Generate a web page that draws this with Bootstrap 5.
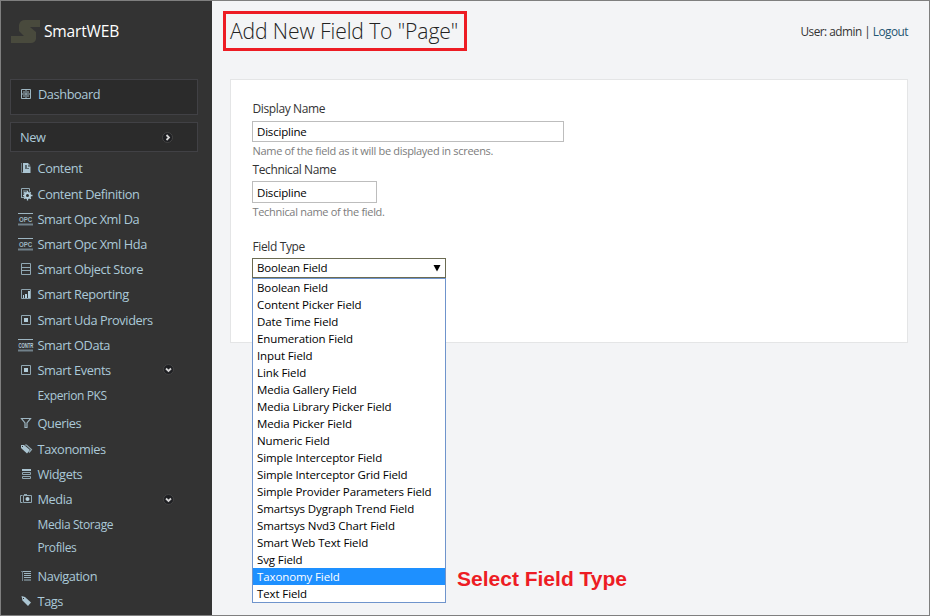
<!DOCTYPE html>
<html lang="en">
<head>
<meta charset="utf-8">
<meta name="viewport" content="width=device-width, initial-scale=1">
<title>SmartWEB - Add New Field</title>
<link href="https://cdn.jsdelivr.net/npm/bootstrap@5.3.0/dist/css/bootstrap.min.css" rel="stylesheet">
<style>
  body { font-family: "Open Sans", "Noto Sans", sans-serif; font-size: 12px; line-height: 18px; color: #333; background: #f3f4f6; }
  .app-frame { height: 616px; border: 1px solid #7f7f7f; }
  .side-panel { width: 211px; background: #333; padding-left: 9px; color: #abc9d8; }
  .side-panel a, .side-panel .nav-label { color: #abc9d8; text-decoration: none; white-space: nowrap; }
  .brand-row { height: 60px; gap: 3px; }
  .brand-name { font-size: 15.6px; color: #fff; letter-spacing: -.2px; }
  .boxed-item { width: 188px; background: #2b2b2b; border: 1px solid #414145; font-size: 12.8px; letter-spacing: -.42px; }
  .dash-item { height: 36px; margin-top: 18px; padding: 0 0 6px 8px; }
  .new-item { height: 30px; margin-top: 7px; padding: 0 24px 0 9px; }
  .menu-list { padding-top: 3.8px; }
  .menu-list .menu-row { height: 25.2px; font-size: 12.8px; letter-spacing: -.42px; padding: 0 38px 0 8px; }
  .ico { width: 16px; height: 16px; flex: none; margin-right: 3.5px; display: block; }
  .dash-item .ico { margin-left: -1px; margin-right: 4px; }
  .chev { width: 11px; height: 11px; flex: none; display: block; }
  .sub-menu { padding: 1.6px 0 3.8px 27.5px; }
  .sub-menu li { height: 23px; font-size: 12px; letter-spacing: -.38px; line-height: 23px; }
  .top-bar { height: 78px; padding: 10px 21px 0 11px; }
  .page-title { width: 244px; height: 40px; border: 3px solid #ed1c24; font-size: 21.1px; font-weight: 300; line-height: 34px; padding-left: 4px; letter-spacing: -.1px; color: #222; white-space: nowrap; }
  .user-info { padding-top: 11px; font-size: 11.8px; letter-spacing: -.5px; }
  .user-info a { color: #1f5571; text-decoration: none; }
  .form-panel { width: 678px; height: 264px; margin-left: 18px; border: 1px solid #e4e5e6; background: #fff; padding: 20px 0 0 21px; letter-spacing: -.38px; }
  .form-panel label, .form-panel .field-title { display: block; height: 18px; margin: 0; padding-left: .5px; }
  .text-box { border: 1px solid #bdbdbd; border-radius: 0; font-size: 11.5px; line-height: 18px; padding: 0 4px; color: #000; letter-spacing: -.2px; min-height: 0; }
  .box-wide { width: 312px; height: 21px; margin-top: 3px; }
  .box-short { width: 125px; height: 22px; margin-top: 2px; }
  .hint-text { height: 19px; font-size: 11px; color: #7c7c7c; letter-spacing: -.31px; padding-left: .5px; }
  .field-title { margin-top: 16px !important; }
  .picker { width: 194px; margin-top: 2px; color: #000; font-size: 11.5px; letter-spacing: -.11px; }
  .picker-value { height: 20px; border: 1px solid #6b6b52; background: #fff; padding: 0 4px; line-height: 18px; letter-spacing: -.15px; }
  .picker-list { top: 20px; left: 0; width: 194px; background: #fff; border: 1px solid #6f94cc; border-radius: 0; z-index: 5; }
  .picker-list li { height: 17px; line-height: 17px; padding-left: 4px; white-space: nowrap; }
  .picker-list li.chosen { background: #1e90ff; color: #fff; }
  .callout-note { left: 205px; top: 309px; font: bold 21px/24px "Liberation Sans", Arial, sans-serif; color: #ed1c24; letter-spacing: 0; white-space: nowrap; }
</style>
<script src="https://cdn.jsdelivr.net/npm/bootstrap@5.3.0/dist/js/bootstrap.bundle.min.js"></script>
</head>
<body>
<svg class="d-none" xmlns="http://www.w3.org/2000/svg">
  <symbol id="i-grid" viewBox="0 0 16 16"><path d="M3.500 3.500h9v9h-9zM8 3v10M3 8h10M5 6h2M9 6h2M5 10h2M9 10h2" fill="none" stroke="#9db5c1"/></symbol>
  <symbol id="i-page" viewBox="0 0 16 16"><path d="M3.500 3v9.500h2" fill="none" stroke="#71818a"/><path d="M5 3h5v3.500h2.500V13H5z" fill="#abc5d2"/><path d="M10 3l2.500 2.500H10z" fill="#8fa5b0"/><path d="M7 5h2v3h2v1H7z" fill="#5c6a71"/></symbol>
  <symbol id="i-def" viewBox="0 0 16 16"><path d="M3.500 12V2.500h8v3M5 5h5M5 7h3M3.500 11.500h3" fill="none" stroke="#91a8b3"/><circle cx="9.500" cy="9.500" r="2.500" fill="none" stroke="#b4cedb" stroke-width="2"/><path d="M9.500 5v2M9.500 12v2.500M5 9.500h2M12 9.500h2.500M6.300 6.300l1.400 1.400M11.300 11.300l1.500 1.500M12.700 6.300l-1.400 1.400M7.700 11.300l-1.500 1.500" stroke="#b4cedb" stroke-width="1.300"/></symbol>
  <symbol id="i-rack" viewBox="0 0 16 16"><path d="M3.500 2.500h9v11h-9zM3.500 6.500h9M3.500 9.500h9" fill="none" stroke="#91a8b3"/></symbol>
  <symbol id="i-chart" viewBox="0 0 16 16"><path d="M3.500 3.500h9v9h-9z" fill="none" stroke="#8ea3ae"/><path d="M5 9h1v3H5zM7 8h2v4H7zM10 5h2v7h-2z" fill="#b4cedb"/></symbol>
  <symbol id="i-square" viewBox="0 0 16 16"><path d="M3.500 3.500h9v9h-9z" fill="none" stroke="#91a8b3"/><path d="M6 6h4v4H6z" fill="#b4cedb"/></symbol>
  <symbol id="i-filter" viewBox="0 0 16 16"><path d="M3.500 3.500h9L9 8v4.500H7V8z" fill="none" stroke="#9db5c1" stroke-width="1.200"/></symbol>
  <symbol id="i-tags" viewBox="0 0 16 16"><path d="M3 4h3l6 5-3 3.500-6-5.500z" fill="#abc5d2"/><path d="M7 4h1.500l5 4.500-2.500 3" fill="none" stroke="#91a8b3" stroke-width="1.200"/><path d="M4 5h1v1H4z" fill="#333"/></symbol>
  <symbol id="i-tag" viewBox="0 0 16 16"><path d="M3.500 3L7 4l6 5.500-3 3.500-5.500-5.500z" fill="#abc5d2"/><path d="M5 5h1v1H5z" fill="#333"/></symbol>
  <symbol id="i-widgets" viewBox="0 0 16 16"><path d="M4 3h9v2H4z" fill="#abc5d2"/><path d="M4.500 6.500h8v2h-8zM4.500 10.500h8v2h-8z" fill="none" stroke="#91a8b3"/></symbol>
  <symbol id="i-camera" viewBox="0 0 16 16"><path d="M4.500 4.500h-2v7h2M5.500 4.500h8v7h-8zM6 3.500h3" fill="none" stroke="#91a8b3"/><circle cx="9.500" cy="8" r="2" fill="#b4cedb"/></symbol>
  <symbol id="i-list" viewBox="0 0 16 16"><path d="M4.500 3v10M3 3.500h3" fill="none" stroke="#71818a"/><path d="M5 3.500h8M6 5.500h7M6 7.500h7M6 9.500h7M6 12h7" fill="none" stroke="#9db5c1"/></symbol>
  <symbol id="i-bars" viewBox="0 0 16 16"><path d="M0 2.500h15" stroke="#9db5c1"/><path d="M0 13.500h15" stroke="#71818a" stroke-width="2"/></symbol>
  <symbol id="c-right" viewBox="0 0 11 11"><circle cx="5.500" cy="5.500" r="5" fill="#1e1f22" stroke="#444"/><path d="M4.500 3l2.500 2.500L4.500 8" fill="none" stroke="#d5d5d5" stroke-width="1.800"/></symbol>
  <symbol id="c-down" viewBox="0 0 11 11"><circle cx="5.500" cy="5.500" r="5" fill="#1e1f22" stroke="#444"/><path d="M3 4.500L5.500 7 8 4.500" fill="none" stroke="#d5d5d5" stroke-width="1.800"/></symbol>
</svg>

<div class="app-frame d-flex overflow-hidden">
  <nav class="side-panel flex-shrink-0">
    <div class="brand-row d-flex align-items-center">
      <svg width="31" height="26" viewBox="0 0 31 26"><path d="M30 2v7H20l6 5v7q-1 4-5 4H1v-7h13l-5-5V7q1-5 6-5z" fill="#494a3d"/></svg>
      <span class="brand-name">SmartWEB</span>
    </div>
    <div class="boxed-item dash-item d-flex align-items-center"><svg class="ico"><use href="#i-grid"/></svg><a href="#">Dashboard</a></div>
    <div class="boxed-item new-item d-flex align-items-center justify-content-between"><span class="nav-label">New</span><svg class="chev"><use href="#c-right"/></svg></div>
    <ul class="menu-list list-unstyled mb-0">
      <li class="menu-row d-flex align-items-center"><svg class="ico"><use href="#i-page"/></svg><a href="#">Content</a></li>
      <li class="menu-row d-flex align-items-center"><svg class="ico"><use href="#i-def"/></svg><a href="#">Content Definition</a></li>
      <li class="menu-row d-flex align-items-center"><svg class="ico" viewBox="0 0 16 16"><use href="#i-bars"/><text transform="translate(1 10.500) scale(.82 1)" font-family="Liberation Sans, sans-serif" font-size="7.500" font-weight="bold" letter-spacing="0" fill="#9db5c1">OPC</text></svg><a href="#">Smart Opc Xml Da</a></li>
      <li class="menu-row d-flex align-items-center"><svg class="ico" viewBox="0 0 16 16"><use href="#i-bars"/><text transform="translate(1 10.500) scale(.82 1)" font-family="Liberation Sans, sans-serif" font-size="7.500" font-weight="bold" letter-spacing="0" fill="#9db5c1">OPC</text></svg><a href="#">Smart Opc Xml Hda</a></li>
      <li class="menu-row d-flex align-items-center"><svg class="ico"><use href="#i-rack"/></svg><a href="#">Smart Object Store</a></li>
      <li class="menu-row d-flex align-items-center"><svg class="ico"><use href="#i-chart"/></svg><a href="#">Smart Reporting</a></li>
      <li class="menu-row d-flex align-items-center"><svg class="ico"><use href="#i-square"/></svg><a href="#">Smart Uda Providers</a></li>
      <li class="menu-row d-flex align-items-center"><svg class="ico" viewBox="0 0 16 16"><use href="#i-bars"/><text transform="translate(.5 10.500) scale(.56 1)" font-family="Liberation Sans, sans-serif" font-size="7.500" font-weight="bold" letter-spacing="0" fill="#b4cedb">CONTR</text></svg><a href="#">Smart OData</a></li>
      <li class="menu-row d-flex align-items-center"><svg class="ico"><use href="#i-square"/></svg><a href="#" class="me-auto">Smart Events</a><svg class="chev"><use href="#c-down"/></svg></li>
    </ul>
    <ul class="sub-menu list-unstyled mb-0"><li><a href="#">Experion PKS</a></li></ul>
    <ul class="menu-list list-unstyled mb-0 pt-0">
      <li class="menu-row d-flex align-items-center"><svg class="ico"><use href="#i-filter"/></svg><a href="#">Queries</a></li>
      <li class="menu-row d-flex align-items-center"><svg class="ico"><use href="#i-tags"/></svg><a href="#">Taxonomies</a></li>
      <li class="menu-row d-flex align-items-center"><svg class="ico"><use href="#i-widgets"/></svg><a href="#">Widgets</a></li>
      <li class="menu-row d-flex align-items-center"><svg class="ico"><use href="#i-camera"/></svg><a href="#" class="me-auto">Media</a><svg class="chev"><use href="#c-down"/></svg></li>
    </ul>
    <ul class="sub-menu list-unstyled mb-0"><li><a href="#">Media Storage</a></li><li><a href="#">Profiles</a></li></ul>
    <ul class="menu-list list-unstyled mb-0 pt-0">
      <li class="menu-row d-flex align-items-center"><svg class="ico"><use href="#i-list"/></svg><a href="#">Navigation</a></li>
      <li class="menu-row d-flex align-items-center"><svg class="ico"><use href="#i-tag"/></svg><a href="#">Tags</a></li>
    </ul>
  </nav>

  <main class="flex-grow-1">
    <header class="top-bar d-flex justify-content-between align-items-start">
      <h1 class="page-title mb-0">Add New Field To "Page"</h1>
      <div class="user-info">User: admin | <a href="#">Logout</a></div>
    </header>
    <form class="form-panel">
      <label for="display-name">Display Name</label>
      <input id="display-name" class="form-control text-box box-wide" type="text" value="Discipline">
      <div class="hint-text">Name of the field as it will be displayed in screens.</div>
      <label for="technical-name">Technical Name</label>
      <input id="technical-name" class="form-control text-box box-short" type="text" value="Discipline">
      <div class="hint-text">Technical name of the field.</div>
      <div class="field-title">Field Type</div>
      <div class="picker position-relative">
        <div class="picker-value d-flex justify-content-between"><span>Boolean Field</span><svg width="8" height="18" viewBox="0 0 8 18"><path d="M0.500 6h7L4 12.500z"/></svg></div>
        <ul class="picker-list list-unstyled mb-0 position-absolute">
          <li>Boolean Field</li><li>Content Picker Field</li><li>Date Time Field</li><li>Enumeration Field</li><li>Input Field</li><li>Link Field</li><li>Media Gallery Field</li><li>Media Library Picker Field</li><li>Media Picker Field</li><li>Numeric Field</li><li>Simple Interceptor Field</li><li>Simple Interceptor Grid Field</li><li>Simple Provider Parameters Field</li><li>Smartsys Dygraph Trend Field</li><li>Smartsys Nvd3 Chart Field</li><li>Smart Web Text Field</li><li>Svg Field</li><li class="chosen">Taxonomy Field</li><li>Text Field</li>
        </ul>
        <div class="callout-note position-absolute">Select Field Type</div>
      </div>
    </form>
  </main>
</div>
</body>
</html>
